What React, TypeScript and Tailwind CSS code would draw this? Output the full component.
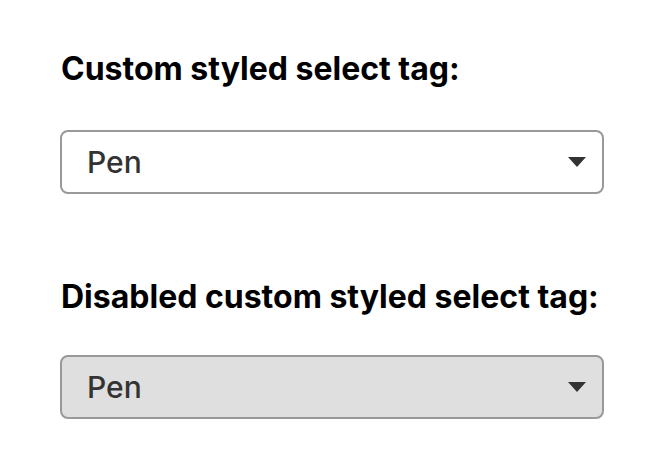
import React from 'react';

function Arrow() {
  return (
    <svg width="18" height="10" viewBox="0 0 18 10" className="pointer-events-none absolute right-[18px] top-1/2 -translate-y-1/2" aria-hidden="true">
      <path d="M0 0 L18 0 L9 10 Z" fill="#333333" />
    </svg>
  );
}

function StyledSelect({ disabled }: { disabled?: boolean }) {
  return (
    <div className="relative -ml-px w-[544px]">
      <select
        disabled={disabled}
        defaultValue="pen"
        className={
          'block h-[64px] w-full appearance-none rounded-[8px] border-2 border-[#999999] pl-[25px] pr-12 text-[30px] font-medium text-[#333333] outline-none ' +
          (disabled ? 'bg-[#dfdfdf]' : 'bg-white')
        }
      >
        <option value="pen">Pen</option>
        <option value="pencil">Pencil</option>
        <option value="marker">Marker</option>
      </select>
      <Arrow />
    </div>
  );
}

export default function App() {
  return (
    <div className="min-h-screen bg-white pl-[61px] pt-[51px] font-['Inter',sans-serif] text-black">
      <label className="block text-[32px] font-bold leading-[36px]">Custom styled select tag:</label>
      <div className="mt-[43px]">
        <StyledSelect />
      </div>
      <label className="mt-[85px] block text-[32px] font-bold leading-[36px]">Disabled custom styled select tag:</label>
      <div className="mt-[40px]">
        <StyledSelect disabled />
      </div>
    </div>
  );
}
